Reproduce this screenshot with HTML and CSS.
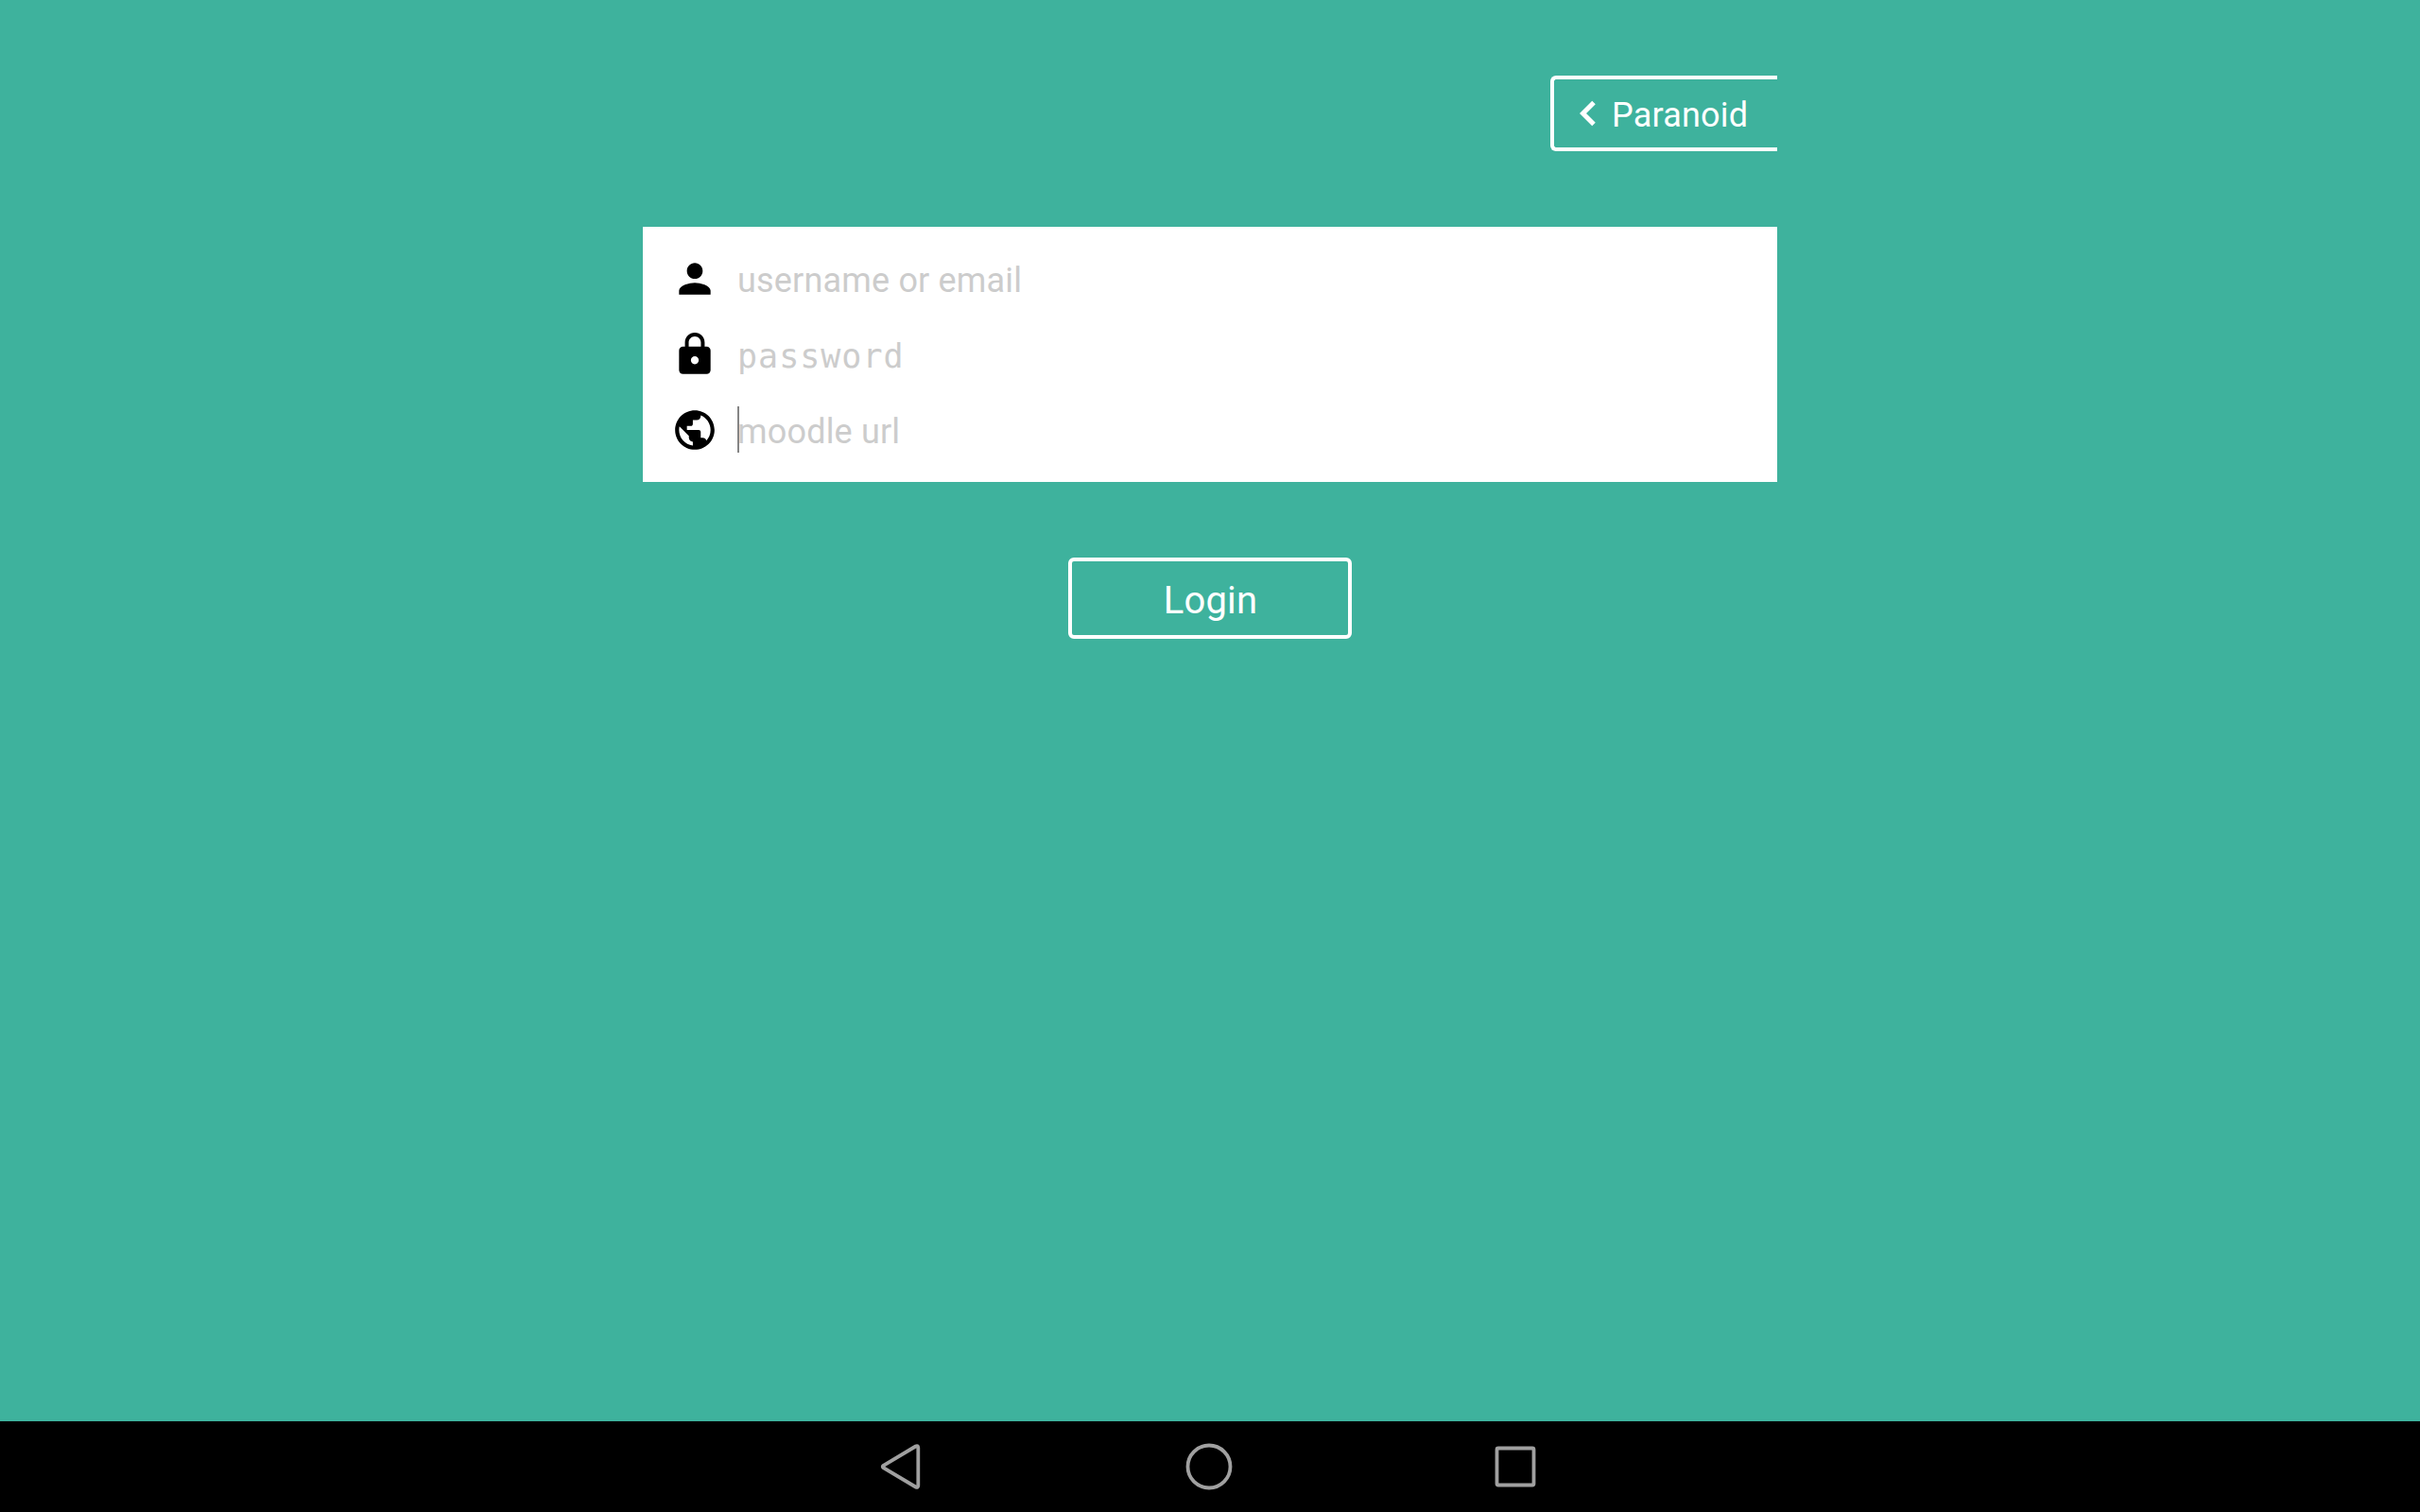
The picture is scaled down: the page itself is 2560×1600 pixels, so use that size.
FILE: index.html
```html
<!DOCTYPE html>
<html lang="en">
<head>
<meta charset="utf-8">
<title>Login</title>
<link rel="stylesheet" href="styles.css">
</head>
<body>
<main class="screen">
  <div class="content">
    <button class="mode-button" type="button">
      <svg class="chevron" viewBox="0 0 18 28"><path d="M15 2.5 3.5 14 15 25.5"/></svg>
      <span class="mode-label">Paranoid</span>
    </button>
    <form class="card">
      <div class="field">
        <svg class="field-icon" viewBox="0 0 24 24"><path d="M12 12c2.21 0 4-1.79 4-4s-1.79-4-4-4-4 1.79-4 4 1.79 4 4 4zm0 2c-2.67 0-8 1.34-8 4v2h16v-2c0-2.66-5.33-4-8-4z"/></svg>
        <span class="hint">username or email</span>
      </div>
      <div class="field">
        <svg class="field-icon" viewBox="0 0 24 24"><path d="M18 8h-1V6c0-2.76-2.24-5-5-5S7 3.24 7 6v2H6c-1.1 0-2 .9-2 2v10c0 1.1.9 2 2 2h12c1.1 0 2-.9 2-2V10c0-1.1-.9-2-2-2zm-6 9c-1.1 0-2-.9-2-2s.9-2 2-2 2 .9 2 2-.9 2-2 2zm3.100-9H8.900V6c0-1.71 1.390-3.100 3.100-3.100s3.100 1.390 3.100 3.100v2z"/></svg>
        <span class="hint mono">password</span>
      </div>
      <div class="field">
        <svg class="field-icon" viewBox="0 0 24 24"><path d="M12 2C6.480 2 2 6.480 2 12s4.480 10 10 10 10-4.480 10-10S17.520 2 12 2zm-1 17.930c-3.950-.49-7-3.850-7-7.930 0-.62.080-1.210.210-1.790L9 15v1c0 1.100.900 2 2 2v1.930zm6.900-2.540c-.260-.810-1-1.390-1.900-1.390h-1v-3c0-.550-.450-1-1-1H8v-2h2c.550 0 1-.450 1-1V7h2c1.100 0 2-.900 2-2v-.410c2.930 1.190 5 4.060 5 7.410 0 2.080-.800 3.970-2.100 5.390z"/></svg>
        <span class="hint focused">moodle url</span>
      </div>
    </form>
    <button class="login-button" type="button">Login</button>
  </div>
</main>
<nav class="navbar">
  <svg class="nav-icon" viewBox="0 0 60 60"><path d="M9.500 28.800 43.600 8.500Q46.100 7.200 46.300 10V50Q46.100 52.800 43.600 51.500L9.500 31.200Q8 30 9.500 28.800Z"/></svg>
  <svg class="nav-icon" viewBox="0 0 60 60"><circle cx="30" cy="30" r="22.500"/></svg>
  <svg class="nav-icon" viewBox="0 0 60 60"><rect x="10.500" y="10.500" width="39" height="39" rx="1.500"/></svg>
</nav>
</body>
</html>
```
FILE: styles.css
```css
* {
  box-sizing: border-box;
}

body {
  margin: 0;
  height: 1600px;
  display: flex;
  flex-direction: column;
  overflow: hidden;
  background: #3eb29d;
  font-family: Roboto, sans-serif;
}

.screen {
  flex: 1;
  display: flex;
  justify-content: center;
}

.content {
  width: 1200px;
  padding-top: 80px;
  display: flex;
  flex-direction: column;
  align-items: center;
}

.mode-button,
.login-button {
  margin: 0;
  border: 4px solid #fff;
  border-radius: 6px;
  background: none;
  color: #fff;
  font-family: inherit;
  letter-spacing: 0.2px;
}

.mode-button {
  align-self: flex-end;
  width: 240px;
  height: 80px;
  padding: 0 0 0 27px;
  border-right: 0;
  border-radius: 6px 0 0 6px;
  display: flex;
  align-items: center;
  gap: 16px;
  font-size: 36px;
}

.mode-label {
  padding-top: 3px;
}

.chevron {
  width: 18px;
  height: 28px;
  margin-top: -1px;
  fill: none;
  stroke: #fff;
  stroke-width: 5;
}

.card {
  width: 100%;
  height: 270px;
  margin: 80px 0;
  padding: 15px 30px;
  background: #fff;
}

.field {
  height: 80px;
  display: flex;
  align-items: center;
  gap: 20px;
}

.field-icon {
  width: 50px;
  height: 50px;
  fill: #000;
}

.hint {
  position: relative;
  padding-top: 3px;
  color: #ccc;
  font-size: 36px;
  line-height: 42px;
  letter-spacing: 0.18px;
}

.mono {
  padding-top: 3px;
  font-family: "DejaVu Sans Mono", monospace;
  font-size: 35px;
  letter-spacing: 1px;
}

/* Text caret at the start of the focused field */
.focused::before {
  content: "";
  position: absolute;
  left: 0;
  top: -3px;
  width: 2px;
  height: 49px;
  background: #858585;
}

.login-button {
  width: 300px;
  height: 86px;
  padding: 4px 0 0 1px;
  font-size: 40px;
}

.navbar {
  height: 96px;
  padding-left: 793px;
  display: grid;
  grid-template-columns: repeat(3, 324px);
  place-items: center;
  background: #000;
}

.nav-icon {
  width: 60px;
  height: 60px;
  fill: none;
  stroke: #a0a0a0;
  stroke-width: 3.8;
}
```
